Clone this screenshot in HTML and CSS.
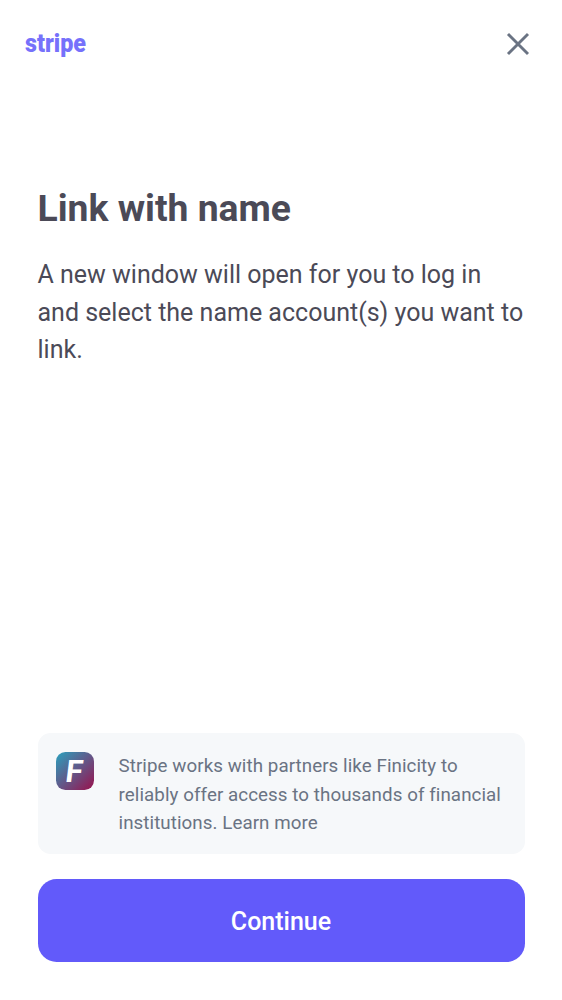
FILE: index.html
```html
<!DOCTYPE html>
<html lang="en">
<head>
<meta charset="utf-8">
<meta name="viewport" content="width=device-width, initial-scale=1">
<title>Link with name</title>
<link rel="stylesheet" href="styles.css">
</head>
<body>
<main class="screen">
  <header class="topbar">
    <svg class="logo" viewBox="0 0 62 28" role="img" aria-label="stripe">
      <text class="logo-text" x="0" y="21.8" textLength="61" lengthAdjust="spacingAndGlyphs">stripe</text>
    </svg>
    <button class="close" aria-label="Close">
      <svg viewBox="0 0 24 24"><path d="M2 2 22 22M22 2 2 22"/></svg>
    </button>
  </header>
  <section class="intro">
    <h1 class="title">Link with name</h1>
    <p class="description">A new window will open for you to log in and select the name account(s) you want to link.</p>
  </section>
  <footer class="footer">
    <div class="notice">
      <svg class="partner" viewBox="0 0 38 38" role="img" aria-label="Finicity">
        <defs>
          <linearGradient id="partner-fill" x1="0" y1="0" x2="1" y2="1">
            <stop offset="0.04" stop-color="#2e9bb9"/>
            <stop offset="0.5" stop-color="#625889"/>
            <stop offset="0.95" stop-color="#931852"/>
          </linearGradient>
        </defs>
        <rect width="38" height="38" rx="9.4" fill="url(#partner-fill)"/>
        <text class="partner-text" transform="translate(8.6 30) skewX(-7)">F</text>
      </svg>
      <p class="notice-text">Stripe works with partners like Finicity to reliably offer access to thousands of financial institutions. Learn more</p>
    </div>
    <button class="continue">Continue</button>
  </footer>
</main>
</body>
</html>
```
FILE: styles.css
```css
* { box-sizing: border-box; }
body {
  margin: 0;
  background: #fff;
  font-family: Roboto, "Liberation Sans", sans-serif;
}
.screen {
  display: flex;
  flex-direction: column;
  width: 562px;
  height: 1000px;
  padding: 0 37.5px 38px;
}
.topbar {
  display: flex;
  align-items: center;
  justify-content: space-between;
  height: 87px;
  margin: 0 -6.5px 0 -13px;
}
.logo { width: 62px; height: 28px; overflow: visible; }
.logo-text {
  font: 900 25.5px Roboto, sans-serif;
  fill: #7671fb;
}
.close {
  display: flex;
  padding: 0;
  border: 0;
  background: none;
}
.close svg {
  width: 26px;
  height: 24px;
  fill: none;
  stroke: #6a7383;
  stroke-width: 2.9;
}
.intro { padding-top: 98px; color: #4b4a57; }
.title {
  margin: 0;
  font-size: 37.3px;
  font-weight: 700;
  line-height: 47px;
}
.description {
  margin: 24.2px 0 0;
  font-size: 25px;
  line-height: 37.5px;
}
.footer { margin-top: auto; }
.notice {
  display: flex;
  gap: 24.5px;
  padding: 18.5px 18.5px 16.8px;
  border-radius: 12.5px;
  background: #f6f8fa;
}
.partner { flex: none; width: 38px; height: 38px; }
.partner-text {
  font: 700 31px Roboto, sans-serif;
  fill: #fff;
}
.notice-text {
  margin: 0;
  padding-top: 0.9px;
  color: #6a7383;
  font-size: 18.75px;
  letter-spacing: 0.07px;
  line-height: 28.1px;
}
.continue {
  display: block;
  width: 100%;
  height: 83.5px;
  margin-top: 25px;
  padding: 2px 0 0;
  border: 0;
  border-radius: 18.7px;
  background: #625afa;
  color: #fff;
  font: 500 25px Roboto, sans-serif;
}
```
